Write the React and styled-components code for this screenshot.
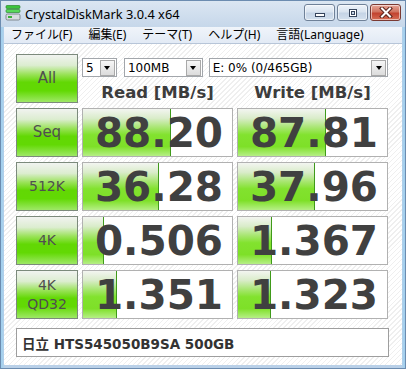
import React from "react";
import styled, { createGlobalStyle } from "styled-components";

const GlobalStyle = createGlobalStyle`
  html, body {
    margin: 0;
    padding: 0;
  }
  body {
    width: 406px;
    height: 369px;
    overflow: hidden;
    font-family: "DejaVu Sans", "Noto Sans CJK JP", sans-serif;
  }
`;

const Window = styled.div`
  width: 406px;
  height: 369px;
  box-sizing: border-box;
  display: flex;
  flex-direction: column;
  border: 1px solid #6c8cb0;
  background: linear-gradient(#dbe6f2, #c6d7ea 26px, #b9d0e8);
`;

const TitleBar = styled.div`
  height: 26px;
  display: flex;
  align-items: flex-start;
  padding: 0 4px 0 4px;
`;

const AppIcon = styled.svg`
  width: 16px;
  height: 16px;
  margin-top: 4px;
  flex: none;
`;

const Title = styled.div`
  flex: 1;
  margin: 5px 0 0 4px;
  font-family: "Noto Sans", sans-serif;
  font-size: 12.8px;
  line-height: 17px;
  color: #000;
`;

const CaptionButtons = styled.div`
  display: flex;
  gap: 2px;
  margin-top: 3px;
`;

const CaptionButton = styled.div`
  width: 31px;
  height: 17px;
  box-sizing: border-box;
  border: 1px solid ${(p) => (p.$close ? "#7a3a33" : "#6f8198")};
  border-radius: 3px;
  display: flex;
  align-items: center;
  justify-content: center;
  background: ${(p) =>
    p.$close
      ? "linear-gradient(#e7a597, #d0735f 45%, #c2432f 55%, #d66e55)"
      : "linear-gradient(#eef3f9, #d9e4f0 45%, #c5d4e6 55%, #d3e0ee)"};
  box-shadow: inset 0 0 0 1px rgba(255, 255, 255, 0.55);
`;

const Frame = styled.div`
  flex: 1;
  display: flex;
  flex-direction: column;
  padding: 0 3px 3px 3px;
  background: linear-gradient(90deg, #9fd0ef, #b9d0e8 4px, #b9d0e8 calc(100% - 4px), #9fd0ef);
`;

const MenuBar = styled.div`
  height: 16px;
  display: flex;
  padding-left: 0;
  background: linear-gradient(#f0f4fa, #e2eaf5);
  border-bottom: 1px solid #b7c5d8;
`;

const MenuItem = styled.div`
  padding: 0 8px;
  font-family: "Noto Sans", "Noto Sans CJK JP", sans-serif;
  font-size: 12px;
  line-height: 16px;
  color: #000;
  white-space: nowrap;
  &:first-child {
    padding-left: 7px;
  }
`;

const Client = styled.div`
  flex: 1;
  display: flex;
  flex-direction: column;
  padding: 10px 13px 8px 12px;
  background-color: #fff;
  background-image: repeating-linear-gradient(
    135deg,
    #ffffff 0px,
    #ffffff 2.5px,
    #efefef 2.5px,
    #efefef 3.5px
  );
`;

const Board = styled.div`
  display: grid;
  grid-template-columns: 62px 151px 151px;
  grid-auto-rows: 49px;
  column-gap: 4px;
  row-gap: 5px;
`;

const TestButton = styled.div`
  box-sizing: border-box;
  border: 1px solid #7c8a7c;
  display: flex;
  align-items: center;
  justify-content: center;
  text-align: center;
  font-family: "DejaVu Sans", sans-serif;
  font-size: ${(p) => (p.$small ? "14px" : "15px")};
  line-height: 19px;
  color: #4f4f4f;
  background: linear-gradient(
    #f1f3f0 0%,
    #dcedd0 22%,
    #97e254 42%,
    #62d804 58%,
    #62d904 76%,
    #9ee866 100%
  );
`;

const TopArea = styled.div`
  grid-column: 2 / 4;
  display: flex;
  flex-direction: column;
`;

const SelectRow = styled.div`
  display: flex;
  margin-top: 4px;
  height: 20px;
`;

const Combo = styled.div`
  width: ${(p) => p.$w}px;
  margin-right: ${(p) => p.$gap || 0}px;
  box-sizing: border-box;
  border: 1px solid #a2a6ab;
  background: #fff;
  display: flex;
  align-items: center;
  font-family: "DejaVu Sans", sans-serif;
  font-size: 12px;
  color: #000;
`;

const ComboText = styled.span`
  flex: 1;
  padding-left: 3px;
  white-space: nowrap;
`;

const ComboArrow = styled.div`
  width: 15px;
  height: 16px;
  margin-right: 1px;
  box-sizing: border-box;
  border: 1px solid #a9a9a9;
  background: linear-gradient(#f6f6f6, #dcdcdc);
  display: flex;
  align-items: center;
  justify-content: center;
  &::after {
    content: "";
    border-left: 3px solid transparent;
    border-right: 3px solid transparent;
    border-top: 4px solid #000;
  }
`;

const Headers = styled.div`
  display: grid;
  grid-template-columns: 151px 151px;
  column-gap: 4px;
`;

const Header = styled.div`
  text-align: center;
  padding-top: 6px;
  font-family: "DejaVu Sans", sans-serif;
  font-weight: bold;
  font-size: 16.5px;
  line-height: 20px;
  color: #3c3c3c;
  white-space: nowrap;
`;

const Score = styled.div`
  position: relative;
  box-sizing: border-box;
  border: 1px solid #b1b1b1;
  background: #fff;
  display: flex;
  align-items: center;
  justify-content: flex-end;
  padding-right: 9px;
  overflow: hidden;
`;

const Meter = styled.div`
  position: absolute;
  left: 0;
  top: 0;
  bottom: 0;
  box-sizing: border-box;
  border-right: 1px solid #3f9a1a;
  background: linear-gradient(
    #f3f5f1 0%,
    #d9ecc9 20%,
    #a6e66e 40%,
    #82e22e 55%,
    #7ee028 80%,
    #b6ef86 100%
  );
`;

const ScoreText = styled.span`
  position: relative;
  font-family: "DejaVu Sans", sans-serif;
  font-weight: bold;
  font-size: 40.5px;
  line-height: 44px;
  color: #404040;
`;

const InfoBox = styled.div`
  margin-top: 9px;
  height: 29px;
  width: 373px;
  box-sizing: border-box;
  border: 1px solid #9e9e9e;
  background: #fff;
  display: flex;
  align-items: center;
  padding-left: 5px;
  font-family: "DejaVu Sans", "Noto Sans CJK JP", sans-serif;
  font-weight: bold;
  font-size: 13.5px;
  color: #333;
`;

const menu = ["ファイル(F)", "編集(E)", "テーマ(T)", "ヘルプ(H)", "言語(Language)"];

const results = [
  { label: "Seq", read: "88.20", write: "87.81" },
  { label: "512K", read: "36.28", write: "37.96", small: true },
  { label: "4K", read: "0.506", write: "1.367", small: true },
  { label: ["4K", "QD32"], read: "1.351", write: "1.323", small: true },
];

const meterWidth = (value) => {
  const v = Math.log10(parseFloat(value) * 10) / 5;
  return `${Math.max(0, Math.min(1, v)) * 100}%`;
};

const ScoreCell = ({ value }) => (
  <Score>
    <Meter style={{ width: meterWidth(value) }} />
    <ScoreText>{value}</ScoreText>
  </Score>
);

const Glyph = ({ kind }) => {
  if (kind === "min") {
    return (
      <svg width="12" height="10" viewBox="0 0 12 10">
        <rect x="1.5" y="5.5" width="9" height="3" fill="#fff" stroke="#36455c" />
      </svg>
    );
  }
  if (kind === "max") {
    return (
      <svg width="12" height="10" viewBox="0 0 12 10">
        <rect x="2.5" y="1.5" width="7" height="7" fill="none" stroke="#36455c" />
        <rect x="3.5" y="2.5" width="5" height="5" fill="none" stroke="#fff" />
        <rect x="4.5" y="3.5" width="3" height="3" fill="none" stroke="#36455c" />
      </svg>
    );
  }
  return (
    <svg width="14" height="11" viewBox="0 0 14 11">
      <path d="M3 1.5 L11 9.5 M11 1.5 L3 9.5" stroke="#5a231c" strokeWidth="4" strokeLinecap="square" />
      <path d="M3 1.5 L11 9.5 M11 1.5 L3 9.5" stroke="#fff" strokeWidth="2" strokeLinecap="square" />
    </svg>
  );
};

export default function App() {
  return (
    <>
      <GlobalStyle />
      <Window>
        <TitleBar>
          <AppIcon viewBox="0 0 16 16">
            <rect x="1" y="0.5" width="14" height="3" rx="1" fill="#3cc43c" stroke="#1e7a1e" strokeWidth="0.6" />
            <rect x="1" y="4.5" width="14" height="3" rx="1" fill="#58d858" stroke="#1e7a1e" strokeWidth="0.6" />
            <rect x="1" y="9" width="14" height="6" rx="1.5" fill="#d8dcdf" stroke="#6c7378" strokeWidth="0.8" />
            <rect x="3" y="11" width="4" height="2" fill="#3ab03a" />
          </AppIcon>
          <Title>CrystalDiskMark 3.0.4 x64</Title>
          <CaptionButtons>
            <CaptionButton>
              <Glyph kind="min" />
            </CaptionButton>
            <CaptionButton>
              <Glyph kind="max" />
            </CaptionButton>
            <CaptionButton $close>
              <Glyph kind="close" />
            </CaptionButton>
          </CaptionButtons>
        </TitleBar>
        <Frame>
          <MenuBar>
            {menu.map((m) => (
              <MenuItem key={m}>{m}</MenuItem>
            ))}
          </MenuBar>
          <Client>
            <Board>
              <TestButton>All</TestButton>
              <TopArea>
                <SelectRow>
                  <Combo $w={35} $gap={7}>
                    <ComboText>5</ComboText>
                    <ComboArrow />
                  </Combo>
                  <Combo $w={79} $gap={6}>
                    <ComboText>100MB</ComboText>
                    <ComboArrow />
                  </Combo>
                  <Combo $w={180}>
                    <ComboText>E: 0% (0/465GB)</ComboText>
                    <ComboArrow />
                  </Combo>
                </SelectRow>
                <Headers>
                  <Header>Read [MB/s]</Header>
                  <Header>Write [MB/s]</Header>
                </Headers>
              </TopArea>
              {results.map((r, i) => (
                <React.Fragment key={i}>
                  <TestButton $small={r.small}>
                    {Array.isArray(r.label) ? (
                      <span>
                        {r.label[0]}
                        <br />
                        {r.label[1]}
                      </span>
                    ) : (
                      r.label
                    )}
                  </TestButton>
                  <ScoreCell value={r.read} />
                  <ScoreCell value={r.write} />
                </React.Fragment>
              ))}
            </Board>
            <InfoBox>日立 HTS545050B9SA 500GB</InfoBox>
          </Client>
        </Frame>
      </Window>
    </>
  );
}
